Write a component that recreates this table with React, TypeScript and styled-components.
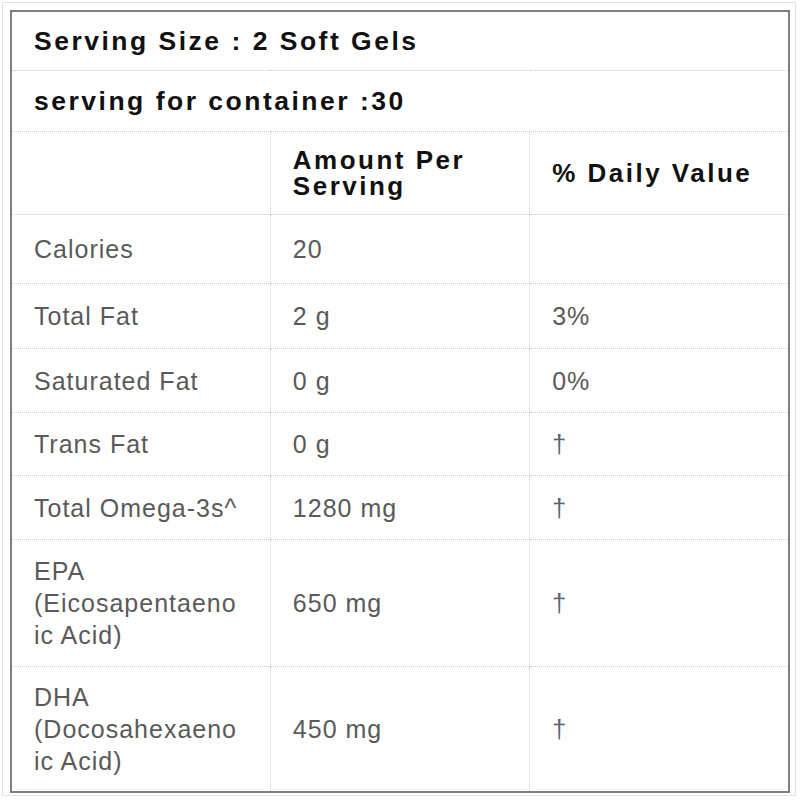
import React from "react";
import styled, { createGlobalStyle } from "styled-components";

const Global = createGlobalStyle`
  html, body { margin: 0; padding: 0; background: #fff; }
  body { font-family: "Liberation Sans", Arial, sans-serif; }
`;

const Frame = styled.div`
  box-sizing: border-box;
  margin: 2px;
  width: 794px;
  height: 794px;
  border: 1px solid #e2e2e2;
  padding: 7px 3px 3px 7px;
`;

const Table = styled.table`
  width: 780px;
  border-collapse: collapse;
  border: 2px solid #808080;
  table-layout: fixed;
`;

const TitleCell = styled.td<{ $h: number }>`
  padding: 0 22px;
  height: ${(p) => p.$h}px;
  font-size: 26.5px;
  font-weight: 700;
  letter-spacing: 2.5px;
  color: #111;
  border-bottom: 1px dotted #cfcfcf;
  vertical-align: middle;
`;

const HeadCell = styled.th`
  padding: 0 22px;
  height: 82px;
  font-size: 26px;
  line-height: 26px;
  font-weight: 700;
  letter-spacing: 2.5px;
  color: #111;
  text-align: left;
  border: 1px dotted #cfcfcf;
  border-top: none;
  vertical-align: middle;
  &:first-child { border-left: none; }
  &:last-child { border-right: none; }
`;

const Cell = styled.td<{ $h: number }>`
  padding: 0 22px;
  height: ${(p) => p.$h}px;
  font-size: 25px;
  line-height: 32px;
  letter-spacing: 1px;
  color: #5a5a5a;
  text-align: left;
  border: 1px dotted #cfcfcf;
  vertical-align: middle;
  &:first-child { border-left: none; }
  &:last-child { border-right: none; }
`;

const Dagger = styled.span`
  color: #5a6472;
  font-weight: 400;
`;

type Row = { name: React.ReactNode; amount: string; dv: string; h: number };

const rows: Row[] = [
  { name: "Calories", amount: "20", dv: "", h: 68 },
  { name: "Total Fat", amount: "2 g", dv: "3%", h: 64 },
  { name: "Saturated Fat", amount: "0 g", dv: "0%", h: 63 },
  { name: "Trans Fat", amount: "0 g", dv: "†", h: 62 },
  { name: "Total Omega-3s^", amount: "1280 mg", dv: "†", h: 63 },
  {
    name: (
      <>
        EPA
        <br />
        (Eicosapentaeno
        <br />
        ic Acid)
      </>
    ),
    amount: "650 mg",
    dv: "†",
    h: 126,
  },
  {
    name: (
      <>
        DHA
        <br />
        (Docosahexaeno
        <br />
        ic Acid)
      </>
    ),
    amount: "450 mg",
    dv: "†",
    h: 124,
  },
];

export default function App() {
  return (
    <>
      <Global />
      <Frame>
        <Table>
          <tbody>
            <tr>
              <TitleCell colSpan={3} $h={58}>
                Serving Size : 2 Soft Gels
              </TitleCell>
            </tr>
            <tr>
              <TitleCell colSpan={3} $h={60}>
                serving for container :30
              </TitleCell>
            </tr>
            <tr>
              <HeadCell></HeadCell>
              <HeadCell>
                Amount Per
                <br />
                Serving
              </HeadCell>
              <HeadCell>% Daily Value</HeadCell>
            </tr>
            {rows.map((r, i) => (
              <tr key={i}>
                <Cell $h={r.h}>{r.name}</Cell>
                <Cell $h={r.h}>{r.amount}</Cell>
                <Cell $h={r.h}>{r.dv === "†" ? <Dagger>†</Dagger> : r.dv}</Cell>
              </tr>
            ))}
          </tbody>
        </Table>
      </Frame>
    </>
  );
}
